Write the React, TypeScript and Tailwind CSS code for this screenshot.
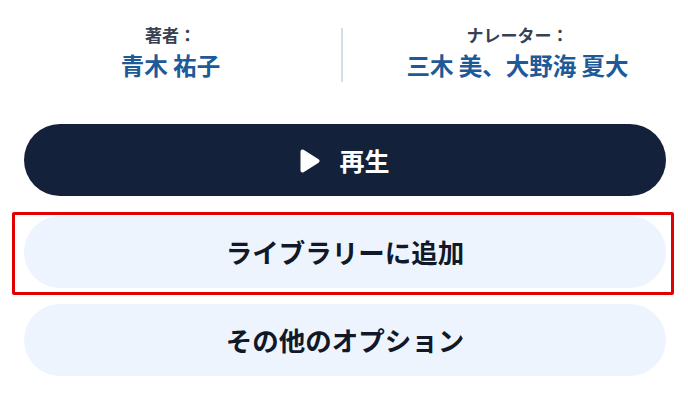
import React from "react";

export default function App() {
  const jp = { fontFamily: '"Noto Sans CJK JP", "Noto Sans", sans-serif' };
  return (
    <div className="w-[688px] h-[400px] bg-white overflow-hidden" style={jp}>
      <div className="flex pt-[28px]">
        <div className="flex-1 flex flex-col items-center -mt-[2px]">
          <div className="text-[17px] leading-[18px] font-semibold text-[#374151]">著者：</div>
          <div className="mt-[7px] text-[23.5px] leading-[28px] font-bold text-[#1e5a98]">青木 祐子</div>
        </div>
        <div className="w-[2px] h-[54px] bg-[#d4dde8]" />
        <div className="flex-1 flex flex-col items-center pl-[4px] -mt-[2px]">
          <div className="text-[17px] leading-[18px] font-semibold text-[#374151]">ナレーター：</div>
          <div className="mt-[7px] text-[23.5px] leading-[28px] font-bold text-[#1e5a98]">三木 美、大野海 夏大</div>
        </div>
      </div>
      <div className="mt-[42px] pl-6 pr-[22px] flex flex-col">
        <div className="h-[72px] rounded-full bg-[#13213a] flex items-center justify-center gap-[19px]">
          <svg width="20" height="24" viewBox="0 0 20 24" className="mt-[1px]">
            <polygon points="2.5,2.5 17.5,12 2.5,21.5" fill="#ffffff" stroke="#ffffff" strokeWidth="4" strokeLinejoin="round" />
          </svg>
          <span className="text-[25px] leading-[30px] font-bold text-white">再生</span>
        </div>
        <div className="relative mt-[20px]">
          <div className="h-[72px] rounded-full bg-[#eef4fd] flex items-center justify-center">
            <span className="text-[26.5px] leading-[30px] font-bold text-[#111827]">ライブラリーに追加</span>
          </div>
          <div className="absolute -left-[12px] -right-[8px] -top-[4px] -bottom-[7px] border-[3px] border-[#e10000] rounded-[2px] pointer-events-none" />
        </div>
        <div className="mt-[16px] h-[72px] rounded-full bg-[#eef4fd] flex items-center justify-center">
          <span className="text-[26.5px] leading-[30px] font-bold text-[#111827]">その他のオプション</span>
        </div>
      </div>
    </div>
  );
}
